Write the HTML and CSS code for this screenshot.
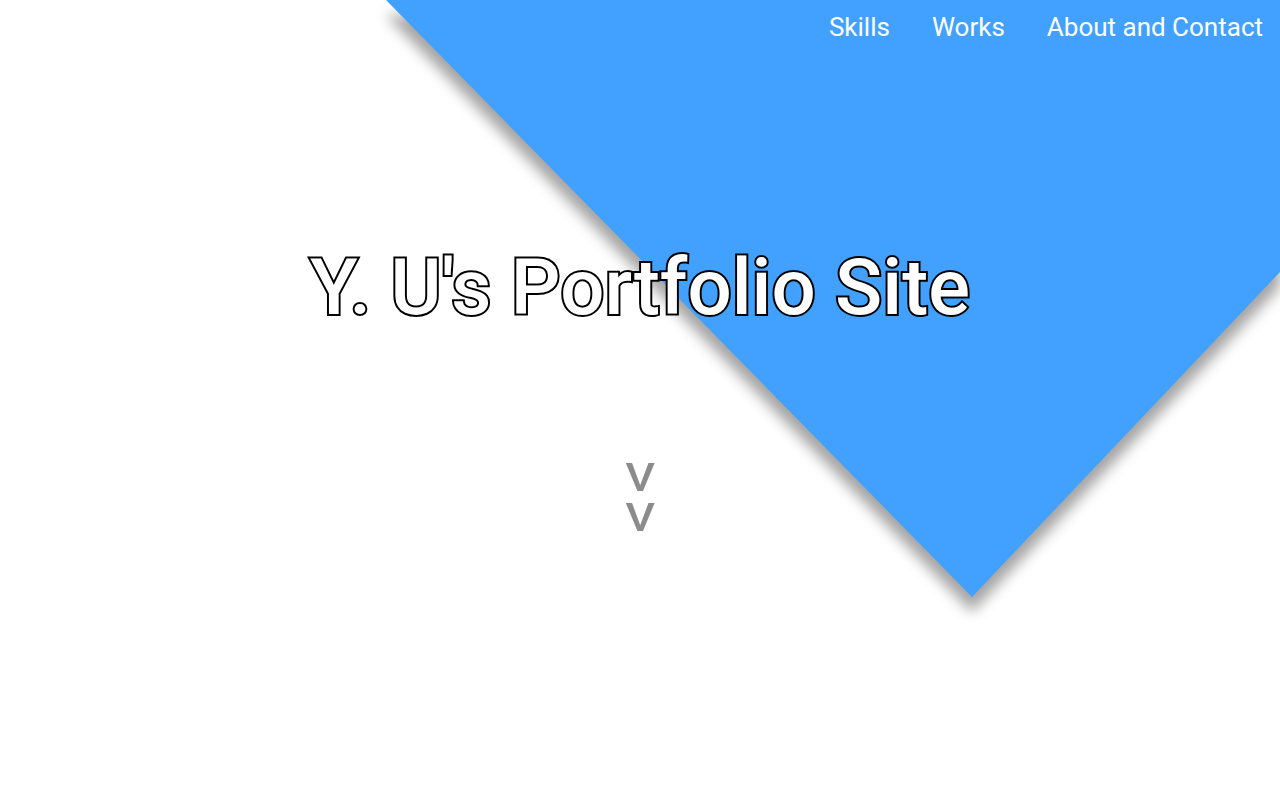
FILE: index.html
```html
<!DOCTYPE html>
<html lang="en">
<head>
<meta charset="utf-8">
<title>Y. U's Portfolio Site</title>
<link rel="stylesheet" href="styles.css">
</head>
<body>
<div class="page">
  <svg class="backdrop" width="1280" height="800" viewBox="0 0 1280 800" aria-hidden="true">
    <polygon class="backdrop-shape" points="386,0 1280,0 1280,272 972,597"/>
  </svg>
  <header class="nav">
    <a class="nav-link" href="#skills">Skills</a>
    <a class="nav-link" href="#works">Works</a>
    <a class="nav-link" href="#about">About and Contact</a>
  </header>
  <main class="hero">
    <h1 class="hero-title">Y. U's Portfolio Site</h1>
    <div class="scroll-hint">
      <span class="chev">V</span>
      <span class="chev">V</span>
    </div>
  </main>
</div>
</body>
</html>
```

FILE: styles.css
```css
html, body {
  margin: 0;
  padding: 0;
  background: #ffffff;
}

body {
  font-family: Roboto, "Liberation Sans", sans-serif;
}

.page {
  position: relative;
  width: 1280px;
  height: 800px;
  overflow: hidden;
}

.backdrop {
  position: absolute;
  left: 0;
  top: 0;
  z-index: 0;
}

.backdrop-shape {
  fill: #42a1ff;
  filter: drop-shadow(0 15px 7px rgba(0, 0, 0, 0.36));
}

.nav {
  position: relative;
  z-index: 1;
  display: flex;
  justify-content: flex-end;
  gap: 42px;
  padding: 11px 17px 0 0;
  height: 43px;
  box-sizing: border-box;
}

.nav-link {
  color: #ffffff;
  text-decoration: none;
  font-size: 26px;
  font-weight: 400;
  line-height: 32px;
}

.hero {
  position: relative;
  z-index: 1;
  display: flex;
  flex-direction: column;
  align-items: center;
}

.hero-title {
  margin: 195px 0 0;
  font-size: 78px;
  font-weight: 500;
  line-height: 100px;
  color: #ffffff;
  -webkit-text-stroke: 4px #000000;
  paint-order: stroke fill;
  letter-spacing: 0;
}

.scroll-hint {
  margin-top: 120px;
  display: flex;
  flex-direction: column;
  align-items: center;
}

.chev {
  color: #8c8c8c;
  font-size: 38px;
  line-height: 40px;
  font-weight: 500;
  transform: scaleX(1.2);
}
```
